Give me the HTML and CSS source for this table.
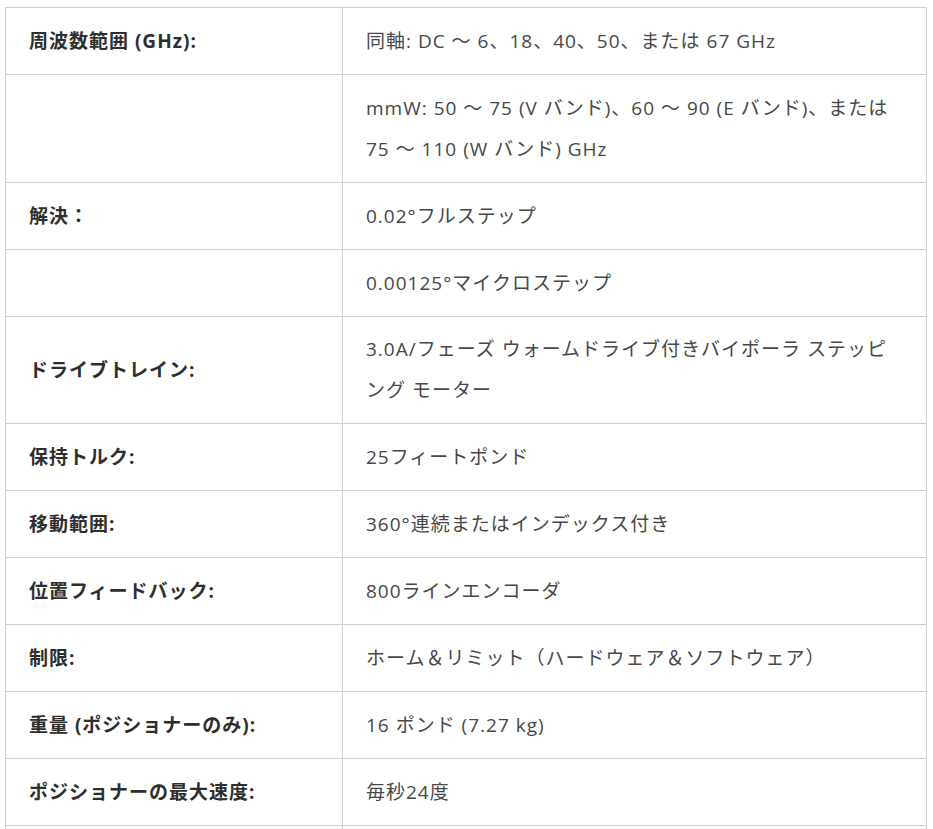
FILE: index.html
```html
<!DOCTYPE html>
<html lang="ja">
<head>
<meta charset="utf-8">
<title>仕様</title>
<link rel="stylesheet" href="styles.css">
</head>
<body>
<div class="wrap">
<table class="spec">
  <colgroup><col class="c-label"><col class="c-value"></colgroup>
  <tbody>
    <tr><td class="label">周波数範囲 (GHz):</td><td class="value">同軸: DC ～ 6、18、40、50、または 67 GHz</td></tr>
    <tr><td class="label"></td><td class="value">mmW: 50 ～ 75 (V バンド)、60 ～ 90 (E バンド)、または 75 ～ 110 (W バンド) GHz</td></tr>
    <tr><td class="label">解決：</td><td class="value">0.02°フルステップ</td></tr>
    <tr><td class="label"></td><td class="value">0.00125°マイクロステップ</td></tr>
    <tr><td class="label">ドライブトレイン:</td><td class="value">3.0A/フェーズ ウォームドライブ付きバイポーラ ステッピング モーター</td></tr>
    <tr><td class="label">保持トルク:</td><td class="value">25フィートポンド</td></tr>
    <tr><td class="label">移動範囲:</td><td class="value">360°連続またはインデックス付き</td></tr>
    <tr><td class="label">位置フィードバック:</td><td class="value">800ラインエンコーダ</td></tr>
    <tr><td class="label">制限:</td><td class="value">ホーム＆リミット（ハードウェア＆ソフトウェア）</td></tr>
    <tr><td class="label">重量 (ポジショナーのみ):</td><td class="value">16 ポンド (7.27 kg)</td></tr>
    <tr><td class="label">ポジショナーの最大速度:</td><td class="value">毎秒24度</td></tr>
    <tr><td class="label">&nbsp;</td><td class="value">&nbsp;</td></tr>
  </tbody>
</table>
</div>
</body>
</html>
```
FILE: styles.css
```css
html, body {
  margin: 0;
  padding: 0;
  background: #ffffff;
}
.wrap {
  padding: 7px 0 0 5px;
}
.spec {
  border-collapse: collapse;
  table-layout: fixed;
  width: 921px;
  font-family: "Open Sans", "Noto Sans CJK JP", sans-serif;
  font-size: 19px;
  line-height: 41px;
  letter-spacing: 1px;
}
.c-label { width: 337px; }
.c-value { width: 584px; }
.spec td {
  border: 1px solid #cfcfcf;
  padding: 12.9px 22px 12px 23px;
  vertical-align: middle;
}
.label {
  font-weight: bold;
  color: #2e2e2e;
}
.value {
  color: #474747;
}
```
